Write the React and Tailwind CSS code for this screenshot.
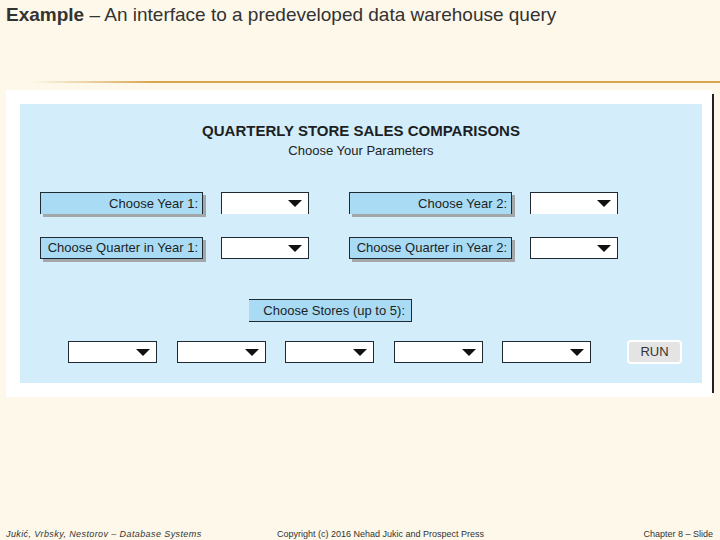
import React from 'react';

function Arrow() {
  return (
    <svg width="14" height="7" viewBox="0 0 14 7" className="shrink-0">
      <polygon points="0,0 14,0 7,7" fill="#111" />
    </svg>
  );
}

// dropdown box, white with dark edges
function Select({ w = 'w-[88px]', bottom = true }) {
  return (
    <div
      className={`${w} h-[22px] bg-white border-t border-x border-[#1f2a33] ${bottom ? 'border-b' : ''} flex items-center justify-end pr-[6px]`}
    >
      <Arrow />
    </div>
  );
}

function Label({ children, bottom = true }) {
  return (
    <div
      className={`w-[163px] h-[22px] bg-[#a9dbf4] border-t border-x border-[#1f2a33] ${bottom ? 'border-b' : ''} shadow-[3px_3px_0_#a3a7a9] flex items-center justify-end pr-[4px] text-[13px] text-[#1c1f24] whitespace-nowrap`}
    >
      {children}
    </div>
  );
}

export default function App() {
  return (
    <div className="w-[720px] h-[540px] bg-[#fdf8ea] flex flex-col overflow-hidden" style={{ fontFamily: '"Liberation Sans", Arial, sans-serif' }}>
      {/* Titulo */}
      <h1 className="pl-[6px] pt-[4px] text-[19px] leading-[22px] text-[#333]">
        <span className="font-bold">Example</span> – An interface to a predeveloped data warehouse query
      </h1>

      {/* linha dourada */}
      <div className="mt-[55px] ml-[30px] flex h-[2px]">
        <div className="w-[120px] h-[2px] bg-linear-to-r from-[#fdf8ea] to-[#d9a750]" />
        <div className="flex-1 h-[2px] bg-[#d9a750]" />
      </div>

      {/* Quadro */}
      <div className="mt-[7px] ml-[6px] flex">
        <div className="w-[706px] h-[307px] bg-white pt-[14px] pl-[14px]">
          <div className="w-[682px] h-[279px] bg-[#d3edfa] flex flex-col">
            <div className="mt-[18px] text-center font-bold text-[15px] leading-[17px] text-[#1c1f24]">
              QUARTERLY STORE SALES COMPARISONS
            </div>
            <div className="mt-[4px] text-center text-[13px] leading-[15px] text-[#222]">
              Choose Your Parameters
            </div>

            <div className="mt-[34px] pl-[20px] flex items-center">
              <Label bottom={false}>Choose Year 1:</Label>
              <div className="ml-[18px]"><Select bottom={false} /></div>
              <div className="ml-[40px]"><Label bottom={false}>Choose Year 2:</Label></div>
              <div className="ml-[18px]"><Select bottom={false} /></div>
            </div>

            <div className="mt-[23px] pl-[20px] flex items-center">
              <Label>Choose Quarter in Year 1:</Label>
              <div className="ml-[18px]"><Select /></div>
              <div className="ml-[40px]"><Label>Choose Quarter in Year 2:</Label></div>
              <div className="ml-[18px]"><Select /></div>
            </div>

            <div className="mt-[40px] pl-[229px] flex">
              <div className="w-[163px] h-[23px] bg-[#a9dbf4] border-y border-r border-[#1f2a33] flex items-center justify-end pr-[6px] text-[13px] text-[#1c1f24]">
                Choose Stores (up to 5):
              </div>
            </div>

            <div className="mt-[18px] pl-[48px] flex items-center">
              <div className="flex gap-[19.5px]">
                <Select w="w-[89px]" />
                <Select w="w-[89px]" />
                <Select w="w-[89px]" />
                <Select w="w-[89px]" />
                <Select w="w-[89px]" />
              </div>
              <button className="ml-[36px] w-[55px] h-[24px] rounded-[4px] bg-[#e4e4e4] border-2 border-white text-[13px] text-[#333]">
                RUN
              </button>
            </div>
          </div>
        </div>
        <div className="mt-[4px] w-[2px] h-[299px] bg-[#222]" />
      </div>

      {/* Rodape */}
      <div className="mt-[132px] flex items-start text-[9px] leading-[11px] text-[#333]">
        <div className="pl-[6px] w-[277px] italic tracking-[0.4px]">Jukić, Vrbsky, Nestorov – Database Systems</div>
        <div className="w-[366px]">Copyright (c) 2016 Nehad Jukic and Prospect Press</div>
        <div className="flex flex-col items-end w-[70px]">
          <span>Chapter 8 – Slide</span>
          <span>55</span>
        </div>
      </div>
    </div>
  );
}
